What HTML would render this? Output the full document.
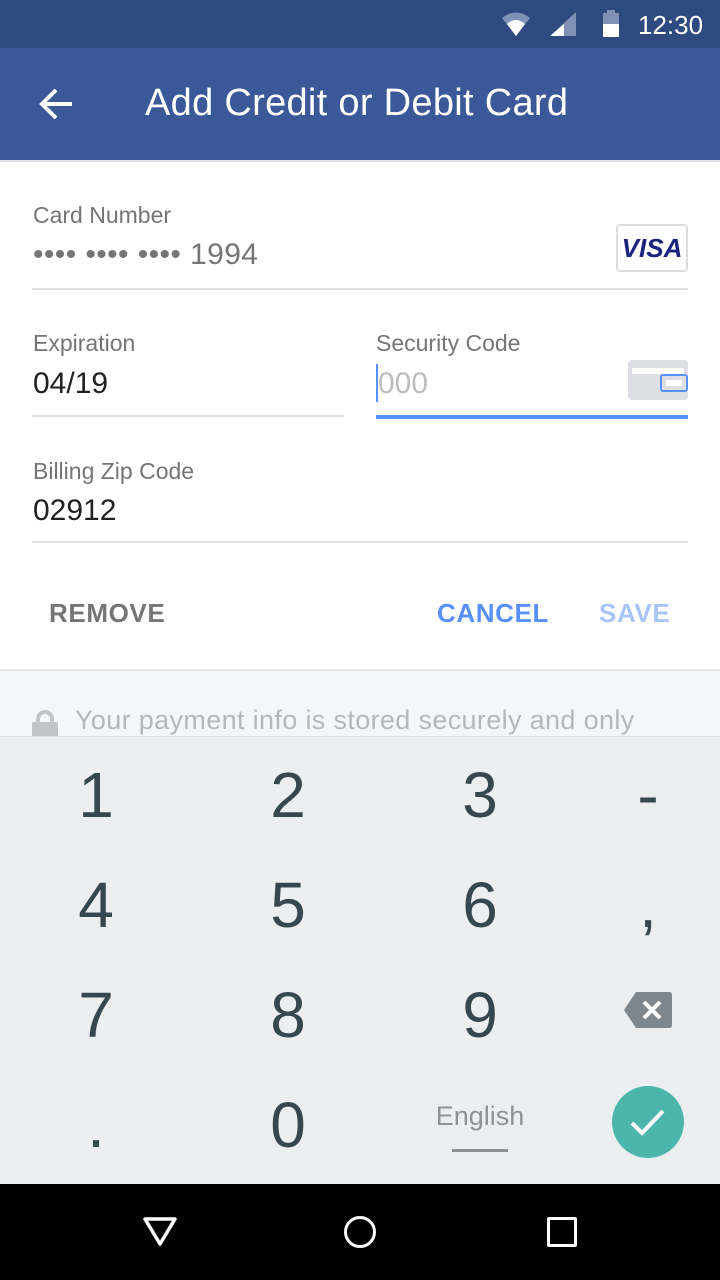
<!DOCTYPE html>
<html><head><meta charset="utf-8"><style>
*{margin:0;padding:0;box-sizing:border-box}
body{width:720px;height:1280px;overflow:hidden;background:#fff;font-family:"Liberation Sans",Roboto,sans-serif;position:relative}
.a{position:absolute}
.lbl{font-size:23px;color:#757575}
.val{font-size:30px;color:#212121}
.line{height:2px;background:#e0e0e0}
.k{position:absolute;width:120px;text-align:center;font-size:64px;color:#37474f;line-height:1}
</style></head><body>
<div class="a" style="left:0;top:0;width:720px;height:48px;background:#2f4a7e"></div>
<svg class="a" style="left:500px;top:10px" width="40" height="30" viewBox="0 0 40 30"><path d="M2 8 Q16 -3 30 8 L16 26Z" fill="#7f91b5"/><path d="M7 14 Q16 6 25 14 L16 26Z" fill="#fff"/></svg>
<svg class="a" style="left:550px;top:12px" width="28" height="26"><path d="M26 0 V24 H0Z" fill="#7f91b5"/><path d="M14 12 V24 H0Z" fill="#fff"/></svg>
<svg class="a" style="left:603px;top:10px" width="18" height="28"><rect x="4" y="0" width="8" height="3" fill="#7f91b5"/><rect x="0" y="3" width="16" height="24" rx="1" fill="#7f91b5"/><rect x="0" y="14" width="16" height="13" rx="1" fill="#fff"/></svg>
<div class="a" style="left:638px;top:10px;font-size:26px;color:#fff">12:30</div>
<div class="a" style="left:0;top:48px;width:720px;height:112px;background:#3b5998"></div>
<svg class="a" style="left:36px;top:86px" width="40" height="36" viewBox="0 0 40 36"><path d="M36 18H6M20 4L6 18L20 32" stroke="#fff" stroke-width="4" fill="none"/></svg>
<div class="a" style="left:145px;top:82px;font-size:38px;color:#fff;letter-spacing:0.3px">Add Credit or Debit Card</div>
<div class="a" style="left:0;top:160px;width:720px;height:2px;background:#dfe3ea"></div>

<div class="a lbl" style="left:33px;top:202px">Card Number</div>
<div class="a" style="left:33px;top:238px;font-size:30px;color:#757575;letter-spacing:0.4px">•••• •••• •••• 1994</div>
<div class="a" style="left:616px;top:224px;width:72px;height:48px;border:2px solid #ddd;border-radius:4px;text-align:center;font:italic bold 26px 'Liberation Sans',sans-serif;color:#1a237e;line-height:44px">VISA</div>
<div class="a line" style="left:32px;top:288px;width:656px"></div>

<div class="a lbl" style="left:33px;top:330px">Expiration</div>
<div class="a val" style="left:33px;top:367px">04/19</div>
<div class="a line" style="left:32px;top:415px;width:312px"></div>
<div class="a lbl" style="left:376px;top:330px">Security Code</div>
<div class="a" style="left:376px;top:364px;width:2px;height:38px;background:#5890ff"></div>
<div class="a" style="left:378px;top:367px;font-size:30px;color:#bdbdbd">000</div>
<div class="a" style="left:628px;top:360px;width:60px;height:40px;background:#dddfe4;border-radius:4px"></div>
<div class="a" style="left:632px;top:368px;width:52px;height:6px;background:#fff"></div>
<div class="a" style="left:660px;top:374px;width:28px;height:18px;border:2px solid #5890ff;border-radius:3px;background:#dddfe4"></div>
<div class="a" style="left:666px;top:380px;width:16px;height:6px;background:#fff"></div>
<div class="a" style="left:376px;top:415px;width:312px;height:4px;background:#5890ff"></div>

<div class="a lbl" style="left:33px;top:458px">Billing Zip Code</div>
<div class="a val" style="left:33px;top:494px">02912</div>
<div class="a line" style="left:32px;top:541px;width:656px"></div>

<div class="a" style="left:49px;top:598px;font-size:26px;font-weight:bold;color:#757575;letter-spacing:0.6px">REMOVE</div>
<div class="a" style="left:437px;top:598px;font-size:26px;font-weight:bold;color:#5890ff;letter-spacing:0.6px">CANCEL</div>
<div class="a" style="left:599px;top:598px;font-size:26px;font-weight:bold;color:#a9c4f9;letter-spacing:0.6px">SAVE</div>

<div class="a" style="left:0;top:669px;width:720px;height:67px;background:#f5f6f7;border-top:2px solid #e1e3e6"></div>
<div class="a" style="left:32px;top:708px;width:26px;height:28px;overflow:hidden"><div style="position:absolute;left:4px;top:2px;width:18px;height:18px;border:4px solid #c3c4c8;border-radius:9px 9px 0 0"></div><div style="position:absolute;left:0;top:14px;width:26px;height:20px;background:#c3c4c8;border-radius:2px"></div></div>
<div class="a" style="left:75px;top:705px;font-size:27px;color:#b5b7bb;letter-spacing:0.35px">Your payment info is stored securely and only</div>

<div class="a" style="left:0;top:736px;width:720px;height:448px;background:#eceff1;border-top:1px solid #dfe2e4"></div>
<div class="k" style="left:36px;top:763px">1</div>
<div class="k" style="left:228px;top:763px">2</div>
<div class="k" style="left:420px;top:763px">3</div>
<div class="k" style="left:588px;top:763px">-</div>
<div class="k" style="left:36px;top:873px">4</div>
<div class="k" style="left:228px;top:873px">5</div>
<div class="k" style="left:420px;top:873px">6</div>
<div class="k" style="left:588px;top:873px">,</div>
<div class="k" style="left:36px;top:983px">7</div>
<div class="k" style="left:228px;top:983px">8</div>
<div class="k" style="left:420px;top:983px">9</div>
<div class="k" style="left:36px;top:1093px">.</div>
<div class="k" style="left:228px;top:1093px">0</div>
<svg class="a" style="left:624px;top:992px" width="48" height="36" viewBox="0 0 48 36"><path d="M12 0H45Q48 0 48 3V33Q48 36 45 36H12L0 18Z" fill="#7e878d"/><path d="M20 10L36 26M36 10L20 26" stroke="#fff" stroke-width="4"/></svg>
<div class="a" style="left:420px;top:1101px;width:120px;text-align:center;font-size:27px;color:#8c9397">English</div>
<div class="a" style="left:452px;top:1149px;width:56px;height:3px;background:#8c9397"></div>
<div class="a" style="left:612px;top:1086px;width:72px;height:72px;border-radius:50%;background:#4db6ac"></div>
<svg class="a" style="left:630px;top:1106px" width="36" height="32"><path d="M2 17L12 27L33 5" stroke="#fff" stroke-width="4" fill="none"/></svg>

<div class="a" style="left:0;top:1184px;width:720px;height:96px;background:#000"></div>
<svg class="a" style="left:142px;top:1216px" width="36" height="32"><path d="M3 3H33L18 28Z" stroke="#fff" stroke-width="3.5" fill="none" stroke-linejoin="round"/></svg>
<div class="a" style="left:344px;top:1216px;width:32px;height:32px;border:3.5px solid #fff;border-radius:50%"></div>
<div class="a" style="left:547px;top:1217px;width:30px;height:30px;border:3.5px solid #fff;border-radius:2px"></div>
</body></html>
